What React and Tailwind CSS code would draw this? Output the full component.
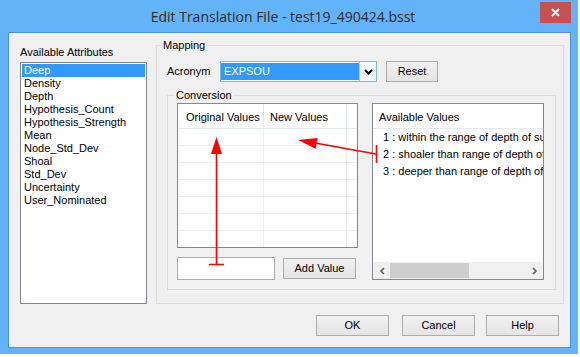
import React from 'react';

const attributes = [
    'Deep',
    'Density',
    'Depth',
    'Hypothesis_Count',
    'Hypothesis_Strength',
    'Mean',
    'Node_Std_Dev',
    'Shoal',
    'Std_Dev',
    'Uncertainty',
    'User_Nominated'
];

const availableValues = [
    '1 : within the range of depth of surrounding nodes',
    '2 : shoaler than range of depth of surrounding nodes',
    '3 : deeper than range of depth of surrounding nodes'
];

const buttonClass = 'h-[21px] border border-[#acacac] bg-linear-to-b from-[#f0f0f0] to-[#e5e5e5] flex items-center justify-center leading-[13px]';

const App = () => {
    return (
        <div className="w-[580px] h-[357px] bg-white font-['Liberation_Sans',Arial,sans-serif] text-[11px] text-black">
            <div className="relative w-[578px] h-[354px] bg-[#63b3f9] flex flex-col">

                {/* Title bar */}
                <div className="h-[32px] flex items-start shrink-0">
                    <div className="flex-1 ml-[26px] pt-[7px] text-center text-[14px] leading-[20px] text-[#2b2b2b] font-['Open_Sans',sans-serif]">
                        Edit Translation File - test19_490424.bsst
                    </div>
                    <div className="w-[31px] h-[21px] mt-[2px] mr-[7px] bg-[#c75050] flex items-center justify-center">
                        <svg width="9" height="9" viewBox="0 0 9 9">
                            <path d="M1 1 L8 8 M8 1 L1 8" stroke="white" strokeWidth="2" />
                        </svg>
                    </div>
                </div>

                {/* Dialog body */}
                <div className="ml-[8px] mr-[7px] h-[316px] border border-[#4f92d6] bg-[#f0f0f0] flex flex-col">
                    <div className="flex items-start">

                        {/* Available Attributes */}
                        <div className="ml-[11px] mt-[13px] w-[127px] shrink-0">
                            <div className="h-[13px] leading-[13px]">Available Attributes</div>
                            <div className="mt-[3px] h-[242px] border border-[#828790] bg-white pt-[1px] px-[1px]">
                                {attributes.map((a, i) => (
                                    <div
                                        key={a}
                                        className={i === 0
                                            ? 'h-[13px] leading-[13px] pl-[2px] bg-[#3399ff] text-white'
                                            : 'h-[13px] leading-[13px] pl-[2px]'}
                                    >
                                        {a}
                                    </div>
                                ))}
                            </div>
                        </div>

                        {/* Mapping */}
                        <fieldset className="ml-[9px] mt-[6px] w-[408px] border border-[#dcdcdc] pb-[13px]">
                            <legend className="ml-[5px] px-[1px] leading-[13px]">Mapping</legend>

                            <div className="flex items-center mt-[9px] pl-[10px] h-[21px]">
                                <span className="w-[53px]">Acronym</span>
                                <div className="w-[157px] h-[21px] border border-[#7eb4ea] bg-white flex">
                                    <div className="flex-1 my-[1px] bg-[#3399ff] text-white pl-[3px] flex items-center">EXPSOU</div>
                                    <div className="w-[17px] border-l border-[#a9cdf0] bg-[#f4f9fe] flex items-center justify-center">
                                        <svg width="9" height="6" viewBox="0 0 9 6">
                                            <path d="M1 1 L4.5 4.5 L8 1" stroke="black" strokeWidth="2" fill="none" />
                                        </svg>
                                    </div>
                                </div>
                                <button className={`${buttonClass} ml-[9px] w-[52px] h-[18px]`}>Reset</button>
                            </div>

                            {/* Conversion */}
                            <fieldset className="ml-[10px] mt-[7px] w-[389px] border border-[#dcdcdc] pb-[9px]">
                                <legend className="ml-[7px] px-[1px] leading-[13px]">Conversion</legend>
                                <div className="flex items-start pt-[1px] pl-[9px]">

                                    <div className="w-[181px] shrink-0">
                                        <div className="h-[145px] border border-[#828790] bg-white overflow-hidden">
                                            <div className="h-[25px] flex border-b border-[#e3e9f3]">
                                                <div className="w-[86px] border-r border-[#e3e9f3] pl-[8px] pt-[2px] flex items-center">Original Values</div>
                                                <div className="w-[83px] border-r border-[#e3e9f3] pl-[6px] pt-[2px] flex items-center">New Values</div>
                                                <div className="flex-1" />
                                            </div>
                                            {[0, 1, 2, 3, 4, 5, 6].map(r => (
                                                <div key={r} className="h-[17px] flex border-b border-[#f0f0f0]">
                                                    <div className="w-[86px] border-r border-[#f0f0f0]" />
                                                    <div className="w-[83px] border-r border-[#f0f0f0]" />
                                                    <div className="flex-1" />
                                                </div>
                                            ))}
                                        </div>
                                        <div className="mt-[9px] flex items-center">
                                            <div className="w-[98px] h-[23px] border border-[#abadb3] bg-white" />
                                            <button className={`${buttonClass} ml-[8px] w-[73px]`}>Add Value</button>
                                        </div>
                                    </div>

                                    <div className="ml-[14px] w-[172px] h-[177px] border border-[#828790] bg-white flex flex-col overflow-hidden">
                                        <div className="h-[25px] shrink-0 border-b border-[#e3e9f3] pl-[6px] pt-[2px] flex items-center">Available Values</div>
                                        <div className="flex-1 pl-[10px] whitespace-nowrap overflow-hidden">
                                            {availableValues.map(v => (
                                                <div key={v} className="h-[17px] leading-[17px]">{v}</div>
                                            ))}
                                        </div>
                                        <div className="h-[17px] shrink-0 bg-[#f0f0f0] flex items-center">
                                            <div className="w-[17px] flex items-center justify-center">
                                                <svg width="6" height="8" viewBox="0 0 6 8">
                                                    <path d="M5 1 L2 4 L5 7" stroke="#606060" strokeWidth="1.6" fill="none" />
                                                </svg>
                                            </div>
                                            <div className="w-[79px] h-[15px] bg-[#cdcdcd]" />
                                            <div className="flex-1" />
                                            <div className="w-[17px] flex items-center justify-center">
                                                <svg width="6" height="8" viewBox="0 0 6 8">
                                                    <path d="M1 1 L4 4 L1 7" stroke="#606060" strokeWidth="1.6" fill="none" />
                                                </svg>
                                            </div>
                                        </div>
                                    </div>

                                </div>
                            </fieldset>
                        </fieldset>
                    </div>

                    {/* Dialog buttons */}
                    <div className="mt-[11px] pl-[307px] flex">
                        <button className={`${buttonClass} w-[73px] border-[#3c8fe0]`}>OK</button>
                        <button className={`${buttonClass} ml-[13px] w-[73px]`}>Cancel</button>
                        <button className={`${buttonClass} ml-[11px] w-[73px]`}>Help</button>
                    </div>
                </div>

                {/* Red annotation arrows */}
                <svg className="absolute left-0 top-0 pointer-events-none" width="578" height="354" viewBox="0 0 578 354">
                    <line x1="216.5" y1="150" x2="216.5" y2="264" stroke="#ff0000" strokeWidth="1.6" />
                    <line x1="209" y1="264.5" x2="224" y2="264.5" stroke="#ff0000" strokeWidth="1.6" />
                    <polygon points="216.5,137 211,154 222,154" fill="#ff0000" />
                    <line x1="315" y1="143" x2="376" y2="154" stroke="#ff0000" strokeWidth="1.6" />
                    <line x1="376.5" y1="145" x2="376.5" y2="163" stroke="#ff0000" strokeWidth="1.6" />
                    <polygon points="298,140 315.7,148.8 317.7,138" fill="#ff0000" />
                </svg>
            </div>
        </div>
    );
};

export default App;
